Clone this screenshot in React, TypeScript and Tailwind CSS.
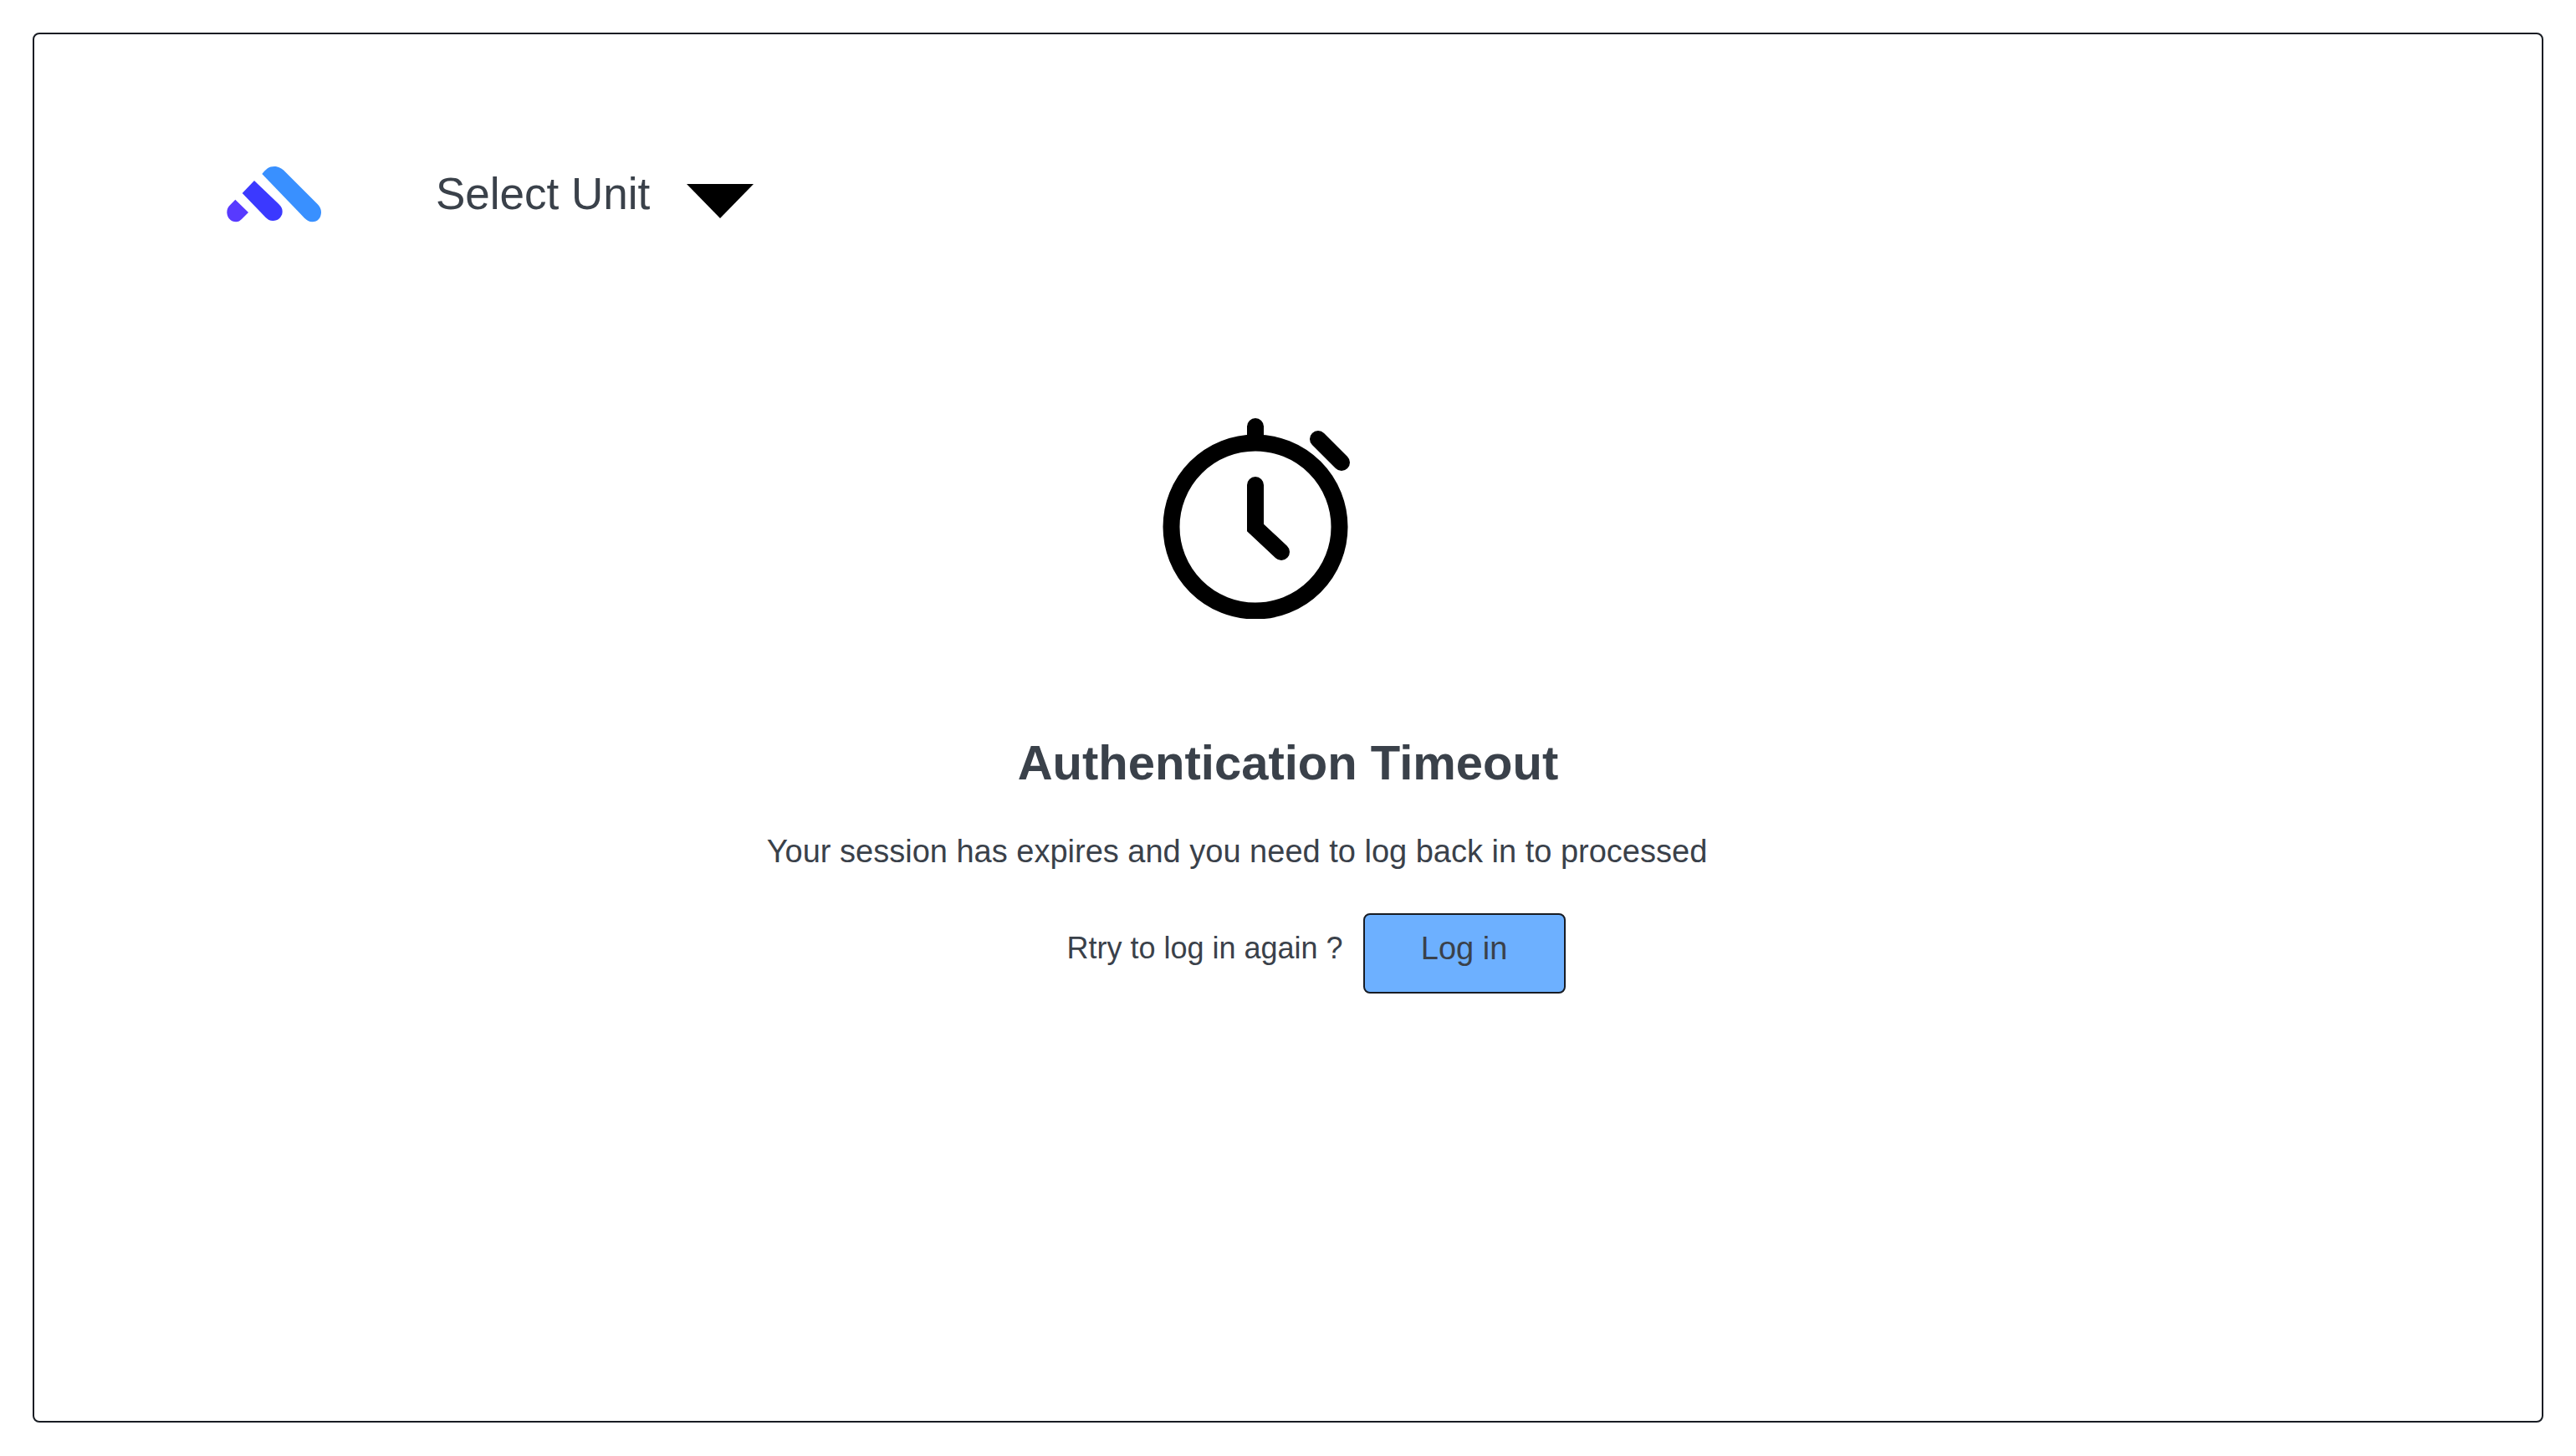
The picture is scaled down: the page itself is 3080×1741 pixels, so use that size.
function Logo() {
  return (
    <svg viewBox="60 54 345 204" className="h-[68px] w-[115px] shrink-0" role="img" aria-label="Company logo">
      <path d="M190 84 C203 67 215 57 234 57 C249 57 261 65 271 74 L388 191 C397 200 402 209 402 221 C402 241 390 256 370 256 C359 256 350 250 342 242 Z" fill="#3990ff" />
      <path d="M162 108 L250 192 C259 201 263 209 263 218 C263 238 248 252 229 252 C218 252 210 247 202 239 L119 153 Z" fill="#3b39ff" />
      <path d="M94 176 L141 222 L117 246 C111 252 105 256 97 256 C78 256 64 241 64 221 C64 211 68 203 75 196 Z" fill="#583aff" />
    </svg>
  );
}

function UnitSelect() {
  return (
    <div className="relative">
      <select
        aria-label="Select Unit"
        className="block cursor-pointer appearance-none bg-transparent pr-[123px] text-[53px] leading-[64px]"
      >
        <option>Select Unit</option>
      </select>
      <svg
        viewBox="0 0 80 58"
        className="pointer-events-none absolute top-[3px] right-0 h-[58px] w-[80px]"
        aria-hidden="true"
      >
        <path d="M0 17 H80 L40 58 Z" fill="#000" />
      </svg>
    </div>
  );
}

function Stopwatch() {
  return (
    <svg
      viewBox="0 0 226 240"
      className="h-[240px] w-[226px]"
      fill="none"
      stroke="#000"
      strokeWidth="20"
      strokeLinecap="round"
      aria-hidden="true"
    >
      <circle cx="111" cy="130" r="100.5" />
      <path d="M111 10 V28" />
      <path d="M111 80 V131 L142 160" strokeLinejoin="miter" />
      <path d="M186 25 L214 53" />
    </svg>
  );
}

export default function App() {
  return (
    <div className="flex min-h-screen flex-col bg-white px-[39px] pt-[39px] pb-[40px] font-['Liberation_Sans',Arial,sans-serif] text-[#3a414a]">
      <main className="flex grow flex-col rounded-lg border-2 border-[#181c23]">
        <header className="flex items-center gap-[136px] pt-[157px] pl-[229px]">
          <Logo />
          <UnitSelect />
        </header>
        <section className="flex flex-col items-center pt-[234px]">
          <div className="pr-[74px]">
            <Stopwatch />
          </div>
          <h1 className="mt-[140px] text-[58px] leading-[64px] font-bold">Authentication Timeout</h1>
          <p className="mt-[50px] pr-[122px] text-[38px] leading-[48px]">
            Your session has expires and you need to log back in to processed
          </p>
          <div className="mt-[50px] flex items-center gap-[24px] pl-[67px]">
            <p className="pb-3 text-[36px] leading-[48px]">Rtry to log in again ?</p>
            <button
              type="button"
              className="h-[96px] w-[242px] cursor-pointer rounded-lg border-2 border-[#181c23] bg-[#6db0ff] pb-3 text-[38px] leading-[48px]"
            >
              Log in
            </button>
          </div>
        </section>
      </main>
    </div>
  );
}
